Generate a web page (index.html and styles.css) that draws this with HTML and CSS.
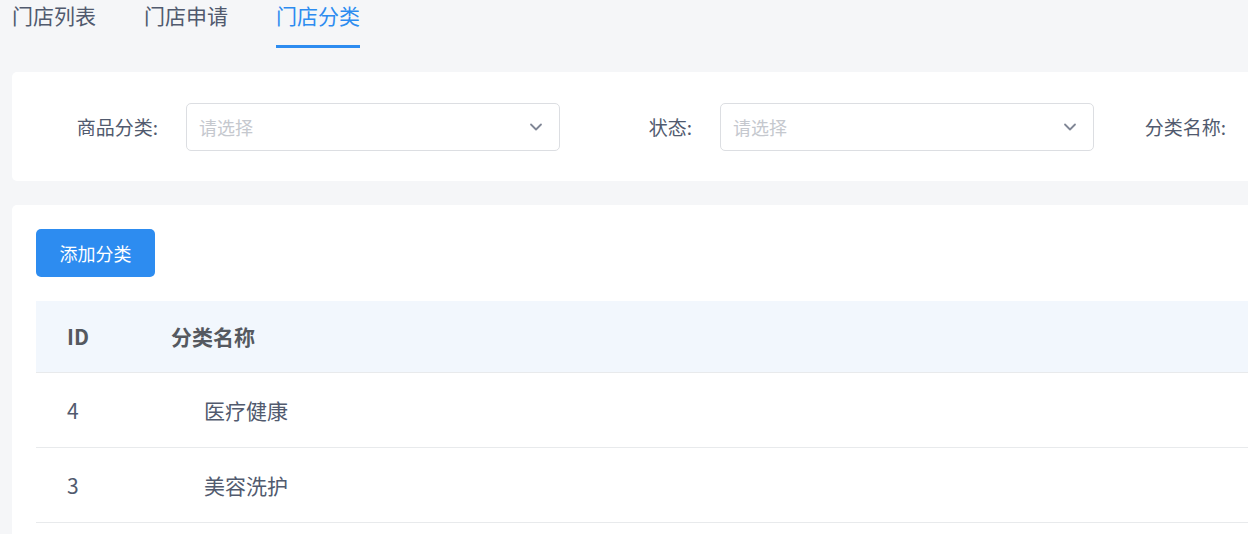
FILE: index.html
```html
<!DOCTYPE html>
<html lang="zh-CN">
<head>
<meta charset="utf-8">
<title>门店分类</title>
<link rel="stylesheet" href="styles.css">
</head>
<body>
<div class="page">
  <nav class="tabs">
    <div class="tab">门店列表</div>
    <div class="tab">门店申请</div>
    <div class="tab active">门店分类</div>
  </nav>

  <section class="card filter-card">
    <div class="form-item">
      <label class="form-label">商品分类:</label>
      <div class="select">
        <span class="placeholder">请选择</span>
        <svg class="chevron" viewBox="0 0 14 14" width="14" height="14"><path d="M2 4.5 L7 9.5 L12 4.5" fill="none" stroke="#808695" stroke-width="1.8" stroke-linecap="round" stroke-linejoin="round"/></svg>
      </div>
    </div>
    <div class="form-item">
      <label class="form-label">状态:</label>
      <div class="select">
        <span class="placeholder">请选择</span>
        <svg class="chevron" viewBox="0 0 14 14" width="14" height="14"><path d="M2 4.5 L7 9.5 L12 4.5" fill="none" stroke="#808695" stroke-width="1.8" stroke-linecap="round" stroke-linejoin="round"/></svg>
      </div>
    </div>
    <div class="form-item">
      <label class="form-label">分类名称:</label>
    </div>
  </section>

  <section class="card list-card">
    <button class="btn-primary">添加分类</button>
    <table class="table">
      <thead>
        <tr><th class="col-id">ID</th><th>分类名称</th></tr>
      </thead>
      <tbody>
        <tr><td class="col-id">4</td><td><span class="tree-indent"></span>医疗健康</td></tr>
        <tr><td class="col-id">3</td><td><span class="tree-indent"></span>美容洗护</td></tr>
      </tbody>
    </table>
  </section>
</div>
</body>
</html>
```

FILE: styles.css
```css
* { box-sizing: border-box; }
html, body {
  margin: 0;
  padding: 0;
  background: #f5f6f8;
  font-family: "Noto Sans CJK SC", "Noto Sans", sans-serif;
  color: #515a6e;
  overflow: hidden;
}
.page {
  width: 1300px;
  height: 534px;
  overflow: hidden;
}
.tabs {
  display: flex;
  gap: 48px;
  padding-left: 12px;
  height: 48px;
}
.tab {
  font-size: 21px;
  line-height: 30px;
  height: 48px;
  padding-bottom: 15px;
  border-bottom: 3px solid transparent;
  color: #515a6e;
  white-space: nowrap;
}
.tab.active {
  color: #2d8cf0;
  border-bottom-color: #2d8cf0;
}
.card {
  background: #fff;
  border-radius: 5px;
  margin-left: 12px;
}
.filter-card {
  margin-top: 24px;
  height: 109px;
  padding: 0 0 0 14px;
  display: flex;
  align-items: center;
}
.form-item {
  display: flex;
  align-items: center;
}
.form-label {
  width: 160px;
  text-align: right;
  padding-right: 28px;
  font-size: 19px;
  color: #515a6e;
  white-space: nowrap;
}
.select {
  width: 374px;
  height: 48px;
  border: 1px solid #dcdee2;
  border-radius: 5px;
  display: flex;
  align-items: center;
  justify-content: space-between;
  padding: 0 16px 0 12px;
}
.placeholder {
  font-size: 18px;
  color: #c5c8ce;
}
.chevron {
  display: block;
}
.list-card {
  margin-top: 24px;
  padding: 24px 0 0 24px;
  height: 400px;
}
.btn-primary {
  display: block;
  width: 119px;
  height: 48px;
  border: none;
  border-radius: 5px;
  background: #2d8cf0;
  color: #fff;
  font-family: inherit;
  font-size: 18px;
  padding: 0;
}
.table {
  margin-top: 24px;
  width: 100%;
  border-collapse: collapse;
  font-size: 21px;
}
.table th {
  background: #f2f7fd;
  height: 71px;
  text-align: left;
  font-weight: bold;
  color: #555960;
  padding: 0 0 0 31px;
  border-bottom: 1px solid #e8eaec;
}
.table td {
  height: 75px;
  padding: 0 0 0 31px;
  color: #515a6e;
  border-bottom: 1px solid #e8eaec;
}
.table .col-id {
  width: 104px;
}
.tree-indent {
  display: inline-block;
  width: 33px;
}
```
